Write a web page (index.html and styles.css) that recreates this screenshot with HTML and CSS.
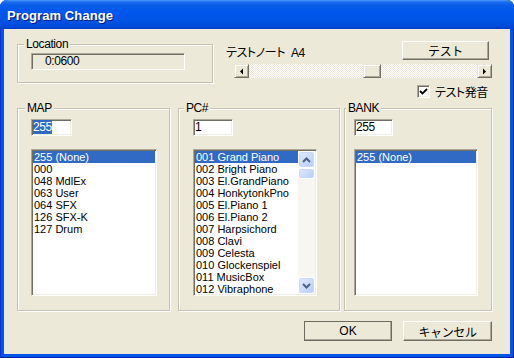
FILE: index.html
```html
<!DOCTYPE html>
<html lang="ja">
<head>
  <meta charset="UTF-8">
  <title>Program Change</title>
  <link rel="stylesheet" href="styles.css">
</head>
<body>
  <div class="window">
    <div class="titlebar"><span class="title">Program Change</span></div>

    <div class="client">
      <div class="top">
        <fieldset class="group group-location">
          <legend>Location</legend>
          <div class="group-body">
            <div class="static">0:0600</div>
          </div>
        </fieldset>

        <div class="note-panel">
          <div class="note-row">
            <span class="note-label ja">テストノート&nbsp;&nbsp;A4</span>
            <button class="btn btn-test ja">テスト</button>
          </div>
          <div class="hscroll">
            <span class="cl-btn">
              <svg width="7" height="7" viewBox="0 0 7 7"><polygon points="2,3.5 5,0.5 5,6.5" fill="#000"/></svg>
            </span>
            <div class="cl-track">
              <!-- 位置はノート番号から計算 -->
              <span class="cl-thumb" style="margin-left: 114px"></span>
            </div>
            <span class="cl-btn">
              <svg width="7" height="7" viewBox="0 0 7 7"><polygon points="5,3.5 2,0.5 2,6.5" fill="#000"/></svg>
            </span>
          </div>
          <label class="check-row">
            <span class="checkbox">
              <svg width="9" height="9" viewBox="0 0 9 9"><path d="M1 4 L3.5 6.5 L8 2" stroke="#000" stroke-width="1.8" fill="none"/></svg>
            </span>
            <span class="ja">テスト発音</span>
          </label>
        </div>
      </div>

      <div class="groups">
        <fieldset class="group group-map">
          <legend>MAP</legend>
          <div class="group-body">
            <div class="field field-map"><span class="sel">255</span></div>
            <div class="listbox list-map">
              <div class="items">
                <div class="item selected">255 (None)</div>
                <div class="item">000</div>
                <div class="item">048 MdlEx</div>
                <div class="item">063 User</div>
                <div class="item">064 SFX</div>
                <div class="item">126 SFX-K</div>
                <div class="item">127 Drum</div>
              </div>
            </div>
          </div>
        </fieldset>

        <fieldset class="group group-pc">
          <legend>PC#</legend>
          <div class="group-body">
            <div class="field field-pc">1</div>
            <div class="listbox list-pc">
              <div class="items">
                <div class="item selected">001 Grand Piano</div>
                <div class="item">002 Bright Piano</div>
                <div class="item">003 El.GrandPiano</div>
                <div class="item">004 HonkytonkPno</div>
                <div class="item">005 El.Piano 1</div>
                <div class="item">006 El.Piano 2</div>
                <div class="item">007 Harpsichord</div>
                <div class="item">008 Clavi</div>
                <div class="item">009 Celesta</div>
                <div class="item">010 Glockenspiel</div>
                <div class="item">011 MusicBox</div>
                <div class="item">012 Vibraphone</div>
              </div>
              <div class="vscroll">
                <span class="vs-btn">
                  <svg width="9" height="6" viewBox="0 0 9 6"><polyline points="1,5 4.5,1.5 8,5" stroke="#4D6185" stroke-width="2" fill="none"/></svg>
                </span>
                <span class="vs-thumb"></span>
                <span class="vs-space"></span>
                <span class="vs-btn">
                  <svg width="9" height="6" viewBox="0 0 9 6"><polyline points="1,1 4.5,4.5 8,1" stroke="#4D6185" stroke-width="2" fill="none"/></svg>
                </span>
              </div>
            </div>
          </div>
        </fieldset>

        <fieldset class="group group-bank">
          <legend>BANK</legend>
          <div class="group-body">
            <div class="field field-bank">255</div>
            <div class="listbox list-bank">
              <div class="items">
                <div class="item selected">255 (None)</div>
              </div>
            </div>
          </div>
        </fieldset>
      </div>

      <div class="actions">
        <button class="btn btn-ok">OK</button>
        <button class="btn btn-cancel ja">キャンセル</button>
      </div>
    </div>
  </div>
</body>
</html>
```

FILE: styles.css
```css
* {
  box-sizing: border-box;
}
body {
  margin: 0;
  background: #fff;
  font-family: "Liberation Sans", "Noto Sans CJK JP", sans-serif;
  font-size: 11px;
  font-feature-settings: "palt";
  color: #000;
}
.ja {
  font-size: 12px;
  letter-spacing: -0.4px;
}
.window {
  width: 514px;
  height: 358px;
  display: flex;
  flex-direction: column;
  background: #0055E5;
  border-radius: 7px 7px 0 0;
  box-shadow: inset 1px 0 #0831D9, inset -1px 0 #001EA0, inset 0 -1px #001EA0;
  overflow: hidden;
}
.titlebar {
  flex: none;
  height: 29px;
  display: flex;
  align-items: center;
  padding: 2px 0 0 7px;
  border-radius: 7px 7px 0 0;
  background: linear-gradient(#4A9BFB 0, #1C6EF0 2px, #0A5CE6 5px, #0058EE 12px, #0054E6 20px, #0049D6 27px, #003DC0 29px);
}
.title {
  color: #fff;
  font-weight: bold;
  font-size: 13px;
  letter-spacing: 0.1px;
  text-shadow: 1px 1px #0A1883;
}
.client {
  flex: 1;
  margin: 0 4px 4px;
  background: #ECE9D8;
  padding: 8px 18px 0 13px;
}

/* group boxes */
.group {
  margin: 0;
  padding: 0;
  min-width: 0;
  border: 1px solid #C5C2B2;
  box-shadow: inset 1px 1px #fff, 1px 1px #fff;
}
.group legend {
  padding: 0 2px;
  height: 14px;
  line-height: 14px;
  font-size: 12px;
  letter-spacing: -0.4px;
  background: #ECE9D8;
}

.top {
  display: flex;
  height: 64px;
  gap: 13px;
}
.group-location {
  width: 196px;
  height: 46px;
}
.group-location legend {
  margin-left: 6px;
}
.group-location .group-body {
  padding: 2px 0 0 13px;
}
.static {
  width: 154px;
  height: 17px;
  padding-left: 13px;
  line-height: 15px;
  font-size: 12px;
  letter-spacing: -0.4px;
  border: 1px solid;
  border-color: #ACA899 #fff #fff #ACA899;
  box-shadow: inset 1px 1px #716F64;
}

.note-panel {
  width: 266px;
  display: flex;
  flex-direction: column;
}
.note-row {
  display: flex;
  align-items: center;
  justify-content: space-between;
  height: 19px;
  margin-top: 4px;
}
.note-label {
  padding-top: 1px;
}

.btn {
  font-family: inherit;
  color: #000;
  padding: 0;
  background: #ECE9D8;
  border: 1px solid;
  border-color: #fff #716F64 #716F64 #fff;
  box-shadow: inset -1px -1px #ACA899;
}
.btn-test {
  width: 87px;
  height: 19px;
  margin-right: 3px;
}

/* classic scrollbar used as note slider */
.hscroll {
  display: flex;
  width: 258px;
  height: 14px;
  margin: 4px 0 0 8px;
}
.cl-btn,
.cl-thumb {
  flex: none;
  display: flex;
  align-items: center;
  justify-content: center;
  border: 1px solid;
  border-color: #ECE9D8 #716F64 #716F64 #ECE9D8;
  box-shadow: inset 1px 1px #fff, inset -1px -1px #ACA899;
  background: #ECE9D8;
}
.cl-btn {
  width: 15px;
}
.cl-track {
  flex: 1;
  display: flex;
  background: repeating-conic-gradient(#ECE9D8 0 25%, #fff 0 50%) 0 0 / 2px 2px;
}
.cl-thumb {
  width: 18px;
}

.check-row {
  display: flex;
  align-items: center;
  gap: 5px;
  height: 13px;
  margin-top: 7px;
  padding-left: 191px;
}
.checkbox {
  width: 13px;
  height: 13px;
  display: flex;
  align-items: center;
  justify-content: center;
  background: #fff;
  border: 1px solid;
  border-color: #ACA899 #fff #fff #ACA899;
  box-shadow: inset 1px 1px #716F64, inset -1px -1px #F1EFE2;
}

/* bottom groups */
.groups {
  display: flex;
}
.groups .group {
  height: 210px;
}
.group-map {
  width: 153px;
}
.group-map legend {
  margin-left: 7px;
}
.group-map .group-body {
  padding: 4px 0 0 13px;
}
.group-pc {
  width: 162px;
  margin-left: 8px;
}
.group-pc legend {
  margin-left: 5px;
}
.group-pc .group-body {
  padding: 4px 0 0 14px;
}
.group-bank {
  width: 148px;
  margin-left: 4px;
}
.group-bank legend {
  margin-left: 1px;
}
.group-bank .group-body {
  padding: 4px 0 0 9px;
}

.field {
  height: 17px;
  padding: 1px;
  line-height: 13px;
  font-size: 12px;
  letter-spacing: -0.4px;
  background: #fff;
  border: 1px solid;
  border-color: #ACA899 #fff #fff #ACA899;
  box-shadow: inset 1px 1px #716F64, inset -1px -1px #F1EFE2;
}
.field-map { width: 41px; }
.field-pc { width: 40px; }
.field-bank { width: 39px; }
.sel {
  background: #316AC5;
  color: #fff;
}

.listbox {
  display: flex;
  height: 147px;
  margin-top: 13px;
  padding: 1px;
  background: #fff;
  border: 1px solid;
  border-color: #ACA899 #fff #fff #ACA899;
  box-shadow: inset 1px 1px #716F64, inset -1px -1px #F1EFE2;
}
.list-map { width: 126px; }
.list-pc { width: 124px; }
.list-bank { width: 124px; }
.items {
  flex: 1;
  min-width: 0;
}
.item {
  height: 12px;
  line-height: 12px;
  padding-left: 1px;
  white-space: nowrap;
  overflow: hidden;
}
.item.selected {
  background: #316AC5;
  color: #fff;
}

/* xp scrollbar inside the PC# list */
.vscroll {
  flex: none;
  width: 17px;
  display: flex;
  flex-direction: column;
  background: #F7F6F0;
}
.vs-btn,
.vs-thumb {
  flex: none;
  display: flex;
  align-items: center;
  justify-content: center;
  border: 1px solid #fff;
  border-radius: 3px;
  background: linear-gradient(135deg, #E2EBFE, #B7CBF7);
  box-shadow: inset 0 0 0 1px #C9D8FA;
}
.vs-btn {
  height: 17px;
}
.vs-thumb {
  height: 11px;
}
.vs-space {
  flex: 1;
}

.actions {
  display: flex;
  justify-content: flex-end;
  gap: 11px;
  margin-top: 10px;
}
.btn-ok {
  width: 88px;
  height: 20px;
  font-size: 12px;
  border-color: #fff #404040 #404040 #fff;
  outline: 1px solid #6D6B60;
  outline-offset: -1px;
}
.btn-cancel {
  width: 89px;
  height: 20px;
}
```
